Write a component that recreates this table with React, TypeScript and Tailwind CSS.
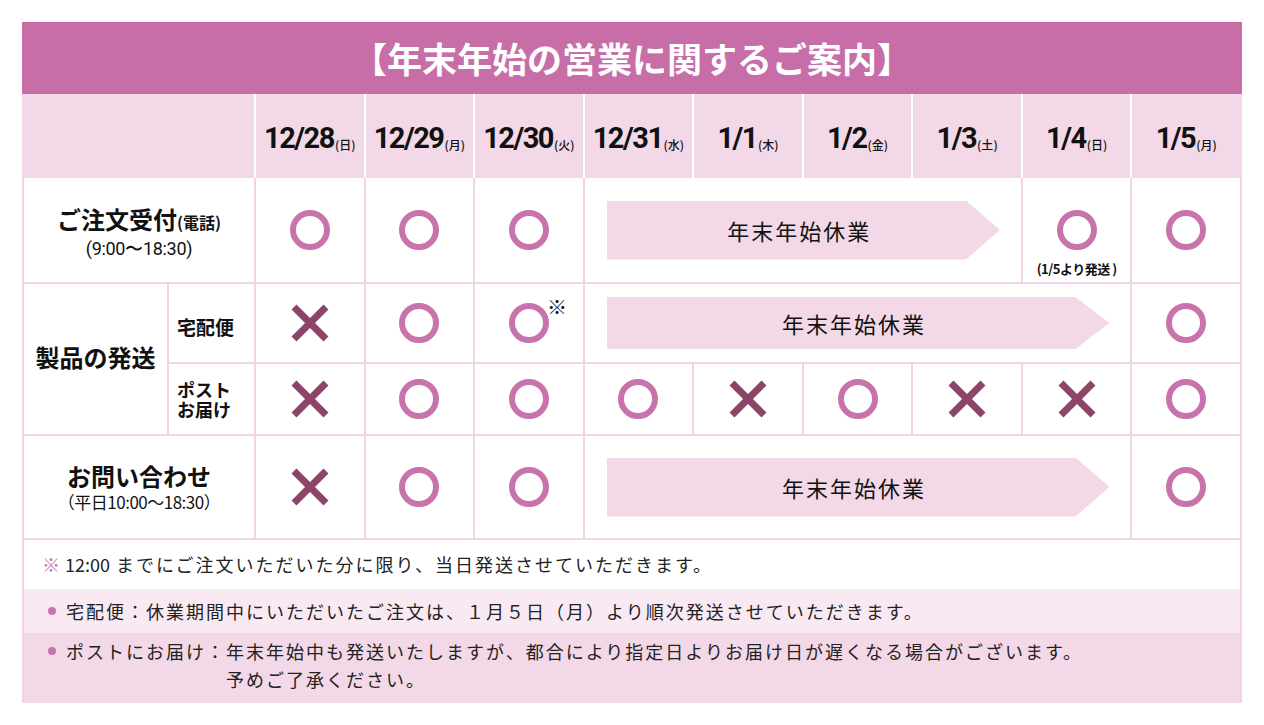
import React from 'react';

type Mark = 'o' | 'x';

const dates = [
  { d: '12/28', w: '日' },
  { d: '12/29', w: '月' },
  { d: '12/30', w: '火' },
  { d: '12/31', w: '水' },
  { d: '1/1', w: '木' },
  { d: '1/2', w: '金' },
  { d: '1/3', w: '土' },
  { d: '1/4', w: '日' },
  { d: '1/5', w: '月' },
];

const postMarks: Mark[] = ['x', 'o', 'o', 'o', 'x', 'o', 'x', 'x', 'o'];

function Ring() {
  return <span className="block h-10 w-10 rounded-full border-[6px] border-[#c873ab]" />;
}

function Cross() {
  return (
    <svg width="38" height="38" viewBox="0 0 38 38" className="block">
      <path d="M3 3 L35 35 M35 3 L3 35" stroke="#8c4568" strokeWidth="7" strokeLinecap="butt" />
    </svg>
  );
}

function Cell({ mark }: { mark: Mark }) {
  return (
    <div className="flex items-center justify-center bg-white">
      {mark === 'o' ? <Ring /> : <Cross />}
    </div>
  );
}

function Closed({ span, tall }: { span: 4 | 5; tall: boolean }) {
  return (
    <div
      className={`flex items-center bg-white pl-[22px] pr-[21px] ${span === 4 ? 'col-span-4' : 'col-span-5'}`}
    >
      <div
        className={`flex w-full items-center justify-center bg-[#f3d8e7] pr-2 text-[22px] tracking-[2px] text-[#111] [clip-path:polygon(0_0,calc(100%_-_34px)_0,100%_50%,calc(100%_-_34px)_100%,0_100%)] ${
          tall ? 'h-[59px]' : 'h-[52px]'
        }`}
      >
        年末年始休業
      </div>
    </div>
  );
}

export default function App() {
  return (
    <div className="min-h-[725px] bg-white pl-[22px] pt-[22px] font-['Noto_Sans_CJK_JP',sans-serif] text-[#111]">
      <div className="w-[1220px]">
        <div className="flex h-[72px] items-center justify-center bg-[#c76ea9] text-[35px] font-bold text-white">
          【年末年始の営業に関するご案内】
        </div>

        {/* date header */}
        <div className="bg-[#f3d8e8] px-[2px]">
          <div className="grid h-[84px] grid-cols-[143px_85px_repeat(9,minmax(0,1fr))] gap-x-[2px] bg-white">
            <div className="col-span-2 bg-[#f3d8e8]" />
            {dates.map((x) => (
              <div key={x.d + x.w} className="flex items-center justify-center bg-[#f3d8e8] pt-1">
                <span className="font-['Roboto',sans-serif] text-[29px] font-bold leading-none tracking-[-1.5px]">
                  {x.d}
                </span>
                <span className="ml-[1px] self-end pb-[27px] text-[12px] font-medium leading-none">({x.w})</span>
              </div>
            ))}
          </div>
        </div>

        {/* body */}
        <div className="bg-[#f2d4e6] px-[2px] pb-[2px]">
          <div className="grid grid-cols-[143px_85px_repeat(9,minmax(0,1fr))] grid-rows-[104px_78px_70px_102px] gap-[2px]">
            {/* row 1 */}
            <div className="col-span-2 flex flex-col items-center justify-center bg-white pt-1">
              <p className="text-[24px] font-bold leading-[30px]">
                ご注文受付<span className="text-[16px]">(電話)</span>
              </p>
              <p className="font-['Roboto',sans-serif] text-[18px] leading-[24px] tracking-[-0.3px]">
                (9:00〜18:30)
              </p>
            </div>
            <Cell mark="o" />
            <Cell mark="o" />
            <Cell mark="o" />
            <Closed span={4} tall />
            <div className="relative flex items-center justify-center bg-white">
              <Ring />
              <span className="absolute bottom-[7px] left-0 right-0 text-center text-[13px] font-bold leading-none tracking-[-0.5px]">
                (1/5より発送 )
              </span>
            </div>
            <Cell mark="o" />

            {/* row 2 */}
            <div className="row-span-2 flex items-center justify-center bg-white pb-1 text-[24px] font-bold">
              製品の発送
            </div>
            <div className="flex items-center bg-white pl-[8px] pt-2 text-[19px] font-bold">宅配便</div>
            <Cell mark="x" />
            <Cell mark="o" />
            <div className="flex items-center justify-center bg-white">
              <div className="relative">
                <Ring />
                <span className="absolute -top-[6px] left-[38px] text-[20px] leading-none">※</span>
              </div>
            </div>
            <Closed span={5} tall={false} />
            <Cell mark="o" />

            {/* row 3 */}
            <div className="flex flex-col justify-center gap-[1px] bg-white pl-[8px] text-[18px] font-bold leading-[19px]">
              <span>ポスト</span>
              <span>お届け</span>
            </div>
            {postMarks.map((m, i) => (
              <Cell key={i} mark={m} />
            ))}

            {/* row 4 */}
            <div className="col-span-2 flex flex-col items-center justify-center bg-white">
              <p className="text-[24px] font-bold leading-[30px]">お問い合わせ</p>
              <p className="text-[17px] leading-[22px] tracking-[-0.5px]">（平日10:00〜18:30）</p>
            </div>
            <Cell mark="x" />
            <Cell mark="o" />
            <Cell mark="o" />
            <Closed span={5} tall />
            <Cell mark="o" />
          </div>
        </div>

        {/* notes */}
        <div className="bg-[#f2d4e6] px-[2px] text-[18px] tracking-[2px] text-[#222]">
          <div className="flex h-[49px] items-center bg-white pl-[18px]">
            <span className="text-[#c873ab]">※</span>
            <span className="ml-[3px] tracking-normal">12:00</span>
            <span className="ml-[6px]">までにご注文いただいた分に限り、当日発送させていただきます。</span>
          </div>
          <div className="flex h-[44px] items-center bg-[#f9e9f3] pl-[24px]">
            <span className="mr-[10px] inline-block h-2 w-2 rounded-full bg-[#c873ab]" />
            <span>宅配便：休業期間中にいただいたご注文は、１月５日（月）より順次発送させていただきます。</span>
          </div>
          <div className="flex bg-[#f3d8e7] pb-[10px] pl-[24px] pt-1 leading-[28px]">
            <span className="mr-[10px] mt-[10px] inline-block h-2 w-2 shrink-0 rounded-full bg-[#c873ab]" />
            <span className="shrink-0">ポストにお届け：</span>
            <div>
              <p>年末年始中も発送いたしますが、都合により指定日よりお届け日が遅くなる場合がございます。</p>
              <p>予めご了承ください。</p>
            </div>
          </div>
        </div>
      </div>
    </div>
  );
}
